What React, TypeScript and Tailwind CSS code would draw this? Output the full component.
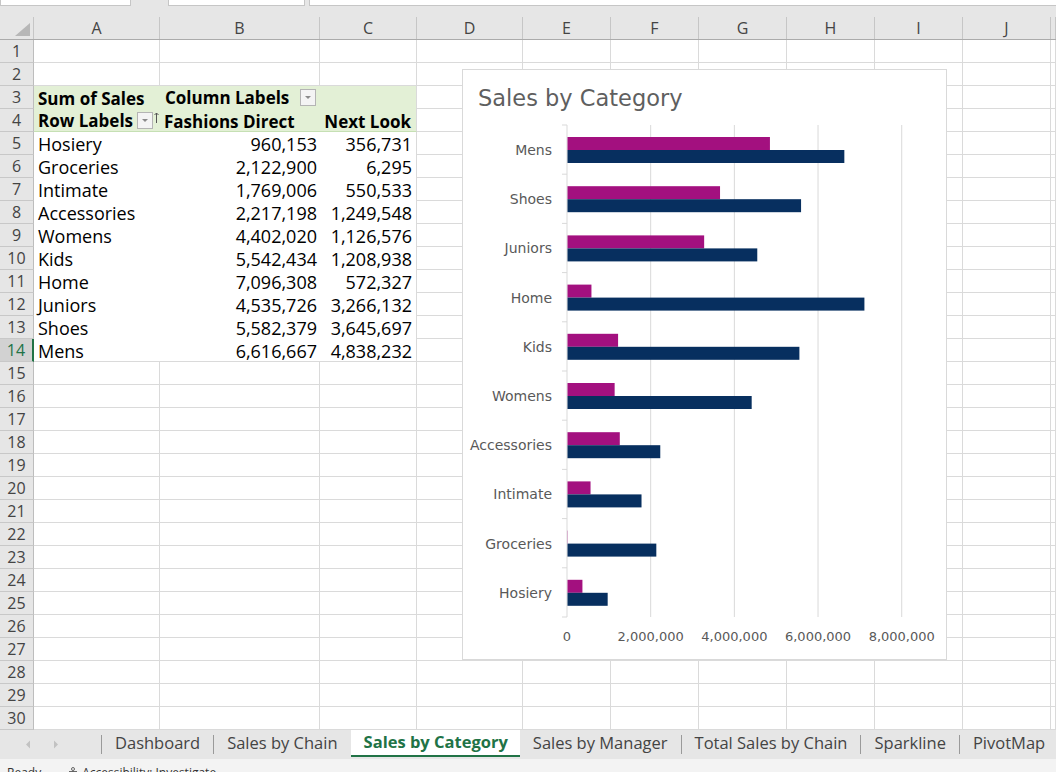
import React from "react";

const cols = [
    { label: "A", w: "w-[126px]" },
    { label: "B", w: "w-[160px]" },
    { label: "C", w: "w-[97px]" },
    { label: "D", w: "w-[106px]" },
    { label: "E", w: "w-[88px]" },
    { label: "F", w: "w-[88px]" },
    { label: "G", w: "w-[88px]" },
    { label: "H", w: "w-[88px]" },
    { label: "I", w: "w-[88px]" },
    { label: "J", w: "w-[88px]" },
    { label: "", w: "flex-1" },
];

const pivotRows: [string, string, string][] = [
    ["Hosiery", "960,153", "356,731"],
    ["Groceries", "2,122,900", "6,295"],
    ["Intimate", "1,769,006", "550,533"],
    ["Accessories", "2,217,198", "1,249,548"],
    ["Womens", "4,402,020", "1,126,576"],
    ["Kids", "5,542,434", "1,208,938"],
    ["Home", "7,096,308", "572,327"],
    ["Juniors", "4,535,726", "3,266,132"],
    ["Shoes", "5,582,379", "3,645,697"],
    ["Mens", "6,616,667", "4,838,232"],
];

// chart order is top to bottom, reversed from the pivot
const chartData = [
    { name: "Mens", fd: 6616667, nl: 4838232 },
    { name: "Shoes", fd: 5582379, nl: 3645697 },
    { name: "Juniors", fd: 4535726, nl: 3266132 },
    { name: "Home", fd: 7096308, nl: 572327 },
    { name: "Kids", fd: 5542434, nl: 1208938 },
    { name: "Womens", fd: 4402020, nl: 1126576 },
    { name: "Accessories", fd: 2217198, nl: 1249548 },
    { name: "Intimate", fd: 1769006, nl: 550533 },
    { name: "Groceries", fd: 2122900, nl: 6295 },
    { name: "Hosiery", fd: 960153, nl: 356731 },
];

const tabs = ["Dashboard", "Sales by Chain", "Sales by Category", "Sales by Manager", "Total Sales by Chain", "Sparkline", "PivotMap"];
const ACTIVE = "Sales by Category";

const FONT = "font-['Open_Sans',sans-serif]";

const DropButton = ({ sort }: { sort?: boolean }) => (
    <div className="flex items-center shrink-0">
        <div className="w-[16px] h-[17px] border border-[#b4b4b4] bg-[#f4f4f4] flex justify-center items-center">
            <svg width="8" height="5" viewBox="0 0 8 5">
                <polygon points="1,1 7,1 4,4" fill="#8a8a8a" />
            </svg>
        </div>
        {sort ? (
            <svg width="5" height="12" viewBox="0 0 5 12" className="ml-[1px] -mt-[4px]">
                <line x1="2.5" y1="1" x2="2.5" y2="11" stroke="#555" strokeWidth="1" />
                <polyline points="0.5,3 2.5,1 4.5,3" fill="none" stroke="#555" strokeWidth="1" />
            </svg>
        ) : null}
    </div>
);

const cellBase = "h-full shrink-0 border-b border-r border-[#dadada]";

const PivotCells = ({ n }: { n: number }) => {
    const green = "bg-[#e3f0d6]";
    if (n === 3) {
        return (
            <>
                <div className={`w-[126px] h-full shrink-0 ${green} pl-[4px] font-bold text-[17px] leading-[25px] text-black whitespace-nowrap`}>Sum of Sales</div>
                <div className={`w-[160px] h-full shrink-0 ${green} pl-[5px] pr-[4px] flex items-center justify-between`}>
                    <span className="font-bold text-[17px] leading-[25px] text-black whitespace-nowrap">Column Labels</span>
                    <DropButton />
                </div>
                <div className={`w-[97px] h-full shrink-0 ${green} border-r border-[#dadada]`} />
            </>
        );
    }
    if (n === 4) {
        return (
            <>
                <div className={`w-[126px] h-full shrink-0 ${green} border-b border-[#c6e0b4] pl-[4px] flex items-center overflow-visible`}>
                    <span className="font-bold text-[17px] leading-[25px] text-black mr-[4px] whitespace-nowrap">Row Labels</span>
                    <DropButton sort />
                </div>
                <div className={`w-[160px] h-full shrink-0 ${green} border-b border-[#c6e0b4] pl-[4px] font-bold text-[17px] leading-[25px] text-black whitespace-nowrap`}>
                    Fashions Direct
                </div>
                <div className={`w-[97px] h-full shrink-0 ${green} border-b border-r border-b-[#c6e0b4] border-r-[#dadada] pr-[5px] text-right font-bold text-[17px] leading-[25px] text-black whitespace-nowrap`}>
                    Next Look
                </div>
            </>
        );
    }
    const [name, fd, nl] = pivotRows[n - 5];
    const last = n === 14 ? "border-b border-[#dadada]" : "";
    return (
        <>
            <div className={`w-[126px] h-full shrink-0 ${last} pl-[4px] text-[18px] leading-[25px] text-black whitespace-nowrap`}>{name}</div>
            <div className={`w-[160px] h-full shrink-0 ${last} pr-[3px] text-right text-[18px] leading-[25px] text-black`}>{fd}</div>
            <div className={`w-[97px] h-full shrink-0 border-r border-[#dadada] ${last} pr-[4px] text-right text-[18px] leading-[25px] text-black`}>{nl}</div>
        </>
    );
};

const SheetRow = ({ n }: { n: number }) => {
    const selected = n === 14;
    const pivot = n >= 3 && n <= 14;
    return (
        <div className="flex h-[23px]">
            <div
                className={`w-[34px] h-full shrink-0 border-b border-[#c8c8c8] text-center text-[16px] leading-[23px] ${
                    selected ? "bg-[#d2d2d2] text-[#217346] border-r-2 border-r-[#217346]" : "bg-[#e6e6e6] text-[#444] border-r border-r-[#bdbdbd]"
                }`}
            >
                {n}
            </div>
            {pivot ? <PivotCells n={n} /> : null}
            {cols.slice(pivot ? 3 : 0).map((c, i) => (
                <div key={i} className={`${c.w} ${cellBase} bg-white`} />
            ))}
        </div>
    );
};

const Chart = () => {
    const x0 = 567;
    const perM = 41.84;
    const top = 125;
    const band = 49.2;
    const wx = (v: number) => (v / 1000000) * perM;
    return (
        <div className="absolute left-[462px] top-[69px] w-[485px] h-[591px] border border-[#d9d9d9] bg-white">
            <svg width="483" height="589" viewBox="463 70 483 589" className="block" fontFamily="'DejaVu Sans', sans-serif">
                <text x="478" y="106" fontSize="22.5" fill="#5f5f5f">
                    Sales by Category
                </text>
                {[1, 2, 3, 4].map((k) => (
                    <line key={k} x1={x0 + k * 83.68} y1={top} x2={x0 + k * 83.68} y2={top + band * 10} stroke="#d9d9d9" strokeWidth="1" />
                ))}
                <line x1={x0} y1={top} x2={x0} y2={top + band * 10} stroke="#d9d9d9" strokeWidth="1" />
                {Array.from({ length: 11 }).map((_, i) => (
                    <line key={i} x1={562} y1={top + i * band} x2={x0} y2={top + i * band} stroke="#d9d9d9" strokeWidth="1" />
                ))}
                {chartData.map((d, i) => {
                    const y = top + i * band;
                    return (
                        <g key={d.name}>
                            <rect x={x0 + 0.5} y={y + 12} width={wx(d.nl)} height="13" fill="#a3107f" />
                            <rect x={x0 + 0.5} y={y + 25} width={wx(d.fd)} height="13" fill="#072f5f" />
                            <text x="552" y={y + 30} fontSize="14" fill="#595959" textAnchor="end">
                                {d.name}
                            </text>
                        </g>
                    );
                })}
                {["0", "2,000,000", "4,000,000", "6,000,000", "8,000,000"].map((l, k) => (
                    <text key={l} x={x0 + k * 83.68} y="641" fontSize="13" fill="#595959" textAnchor="middle">
                        {l}
                    </text>
                ))}
            </svg>
        </div>
    );
};

const TabBar = () => (
    <div className="flex h-[29px] bg-[#e6e6e6] text-[16.5px] text-[#444]">
        <div className="w-[101px] shrink-0 flex items-center">
            <svg width="6" height="9" viewBox="0 0 6 9" className="ml-[25px]">
                <polygon points="5,0.5 5,8.5 1,4.5" fill="#c2c2c2" />
            </svg>
            <svg width="6" height="9" viewBox="0 0 6 9" className="ml-[22px]">
                <polygon points="1,0.5 1,8.5 5,4.5" fill="#c2c2c2" />
            </svg>
        </div>
        {tabs.map((t, i) => {
            const active = t === ACTIVE;
            const prevActive = i > 0 && tabs[i - 1] === ACTIVE;
            return (
                <React.Fragment key={t}>
                    {!active && !prevActive ? <div className="w-px h-[19px] self-center bg-[#9a9a9a] shrink-0" /> : null}
                    {active ? (
                        <div className="flex items-center h-[27px] pl-[13px] pr-[12px] bg-white border-b-2 border-[#217346] text-[#217346] font-bold text-[16.5px] whitespace-nowrap">
                            {t}
                        </div>
                    ) : (
                        <div className="flex items-center h-[27px] px-[13px] whitespace-nowrap">{t}</div>
                    )}
                </React.Fragment>
            );
        })}
    </div>
);

export default function App() {
    return (
        <div className={`w-[1056px] h-[772px] overflow-hidden relative bg-white ${FONT}`}>
            {/* formula bar remains */}
            <div className="flex h-[17px] bg-[#e6e6e6]">
                <div className="w-[131px] h-[6px] bg-white border border-t-0 border-[#c6c6c6]" />
                <div className="w-[137px] h-[6px] ml-[37px] bg-white border border-t-0 border-[#c6c6c6]" />
                <div className="flex-1 h-[6px] ml-[4px] bg-white border border-t-0 border-r-0 border-[#c6c6c6]" />
            </div>
            {/* column headers */}
            <div className="flex h-[23px] bg-[#e6e6e6] border-b border-[#ababab]">
                <div className="w-[34px] shrink-0 h-full border-r border-[#c6c6c6] flex items-end justify-end pr-[3px] pb-[3px]">
                    <svg width="15" height="13" viewBox="0 0 15 13">
                        <polygon points="15,0 15,13 0,13" fill="#b7b7b7" />
                    </svg>
                </div>
                {cols.map((c, i) => (
                    <div key={i} className={`${c.w} shrink-0 h-full border-r border-[#c6c6c6] text-center text-[16px] leading-[23px] text-[#444]`}>
                        {c.label}
                    </div>
                ))}
            </div>
            {Array.from({ length: 30 }).map((_, i) => (
                <SheetRow key={i} n={i + 1} />
            ))}
            <TabBar />
            <div className="h-[24px] bg-[#f3f3f3] flex items-start pt-[7px] pl-[7px] text-[12px] leading-[14px] text-[#333]">
                <span>Ready</span>
                <svg width="10" height="12" viewBox="0 0 10 12" className="ml-[27px] mt-[1px]">
                    <circle cx="5" cy="2" r="1.5" fill="none" stroke="#444" strokeWidth="0.8" />
                    <path d="M1 4.5 L9 4.5 M5 4.5 L5 8 L3 11 M5 8 L7 11" fill="none" stroke="#444" strokeWidth="0.8" />
                </svg>
                <span className="ml-[4px]">Accessibility: Investigate</span>
            </div>
            <Chart />
        </div>
    );
}
